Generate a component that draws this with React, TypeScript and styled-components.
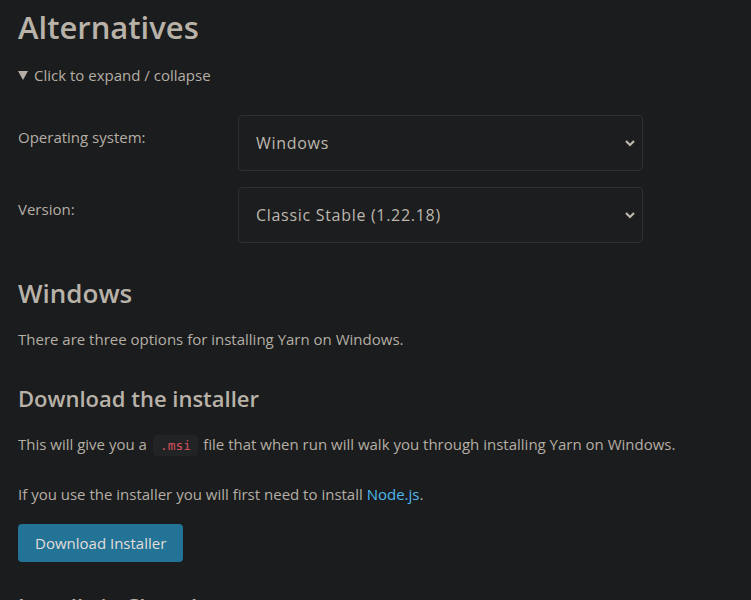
import React from 'react';
import styled, { createGlobalStyle } from 'styled-components';

const GlobalStyle = createGlobalStyle`
  html, body {
    margin: 0;
    padding: 0;
    background: #1b1c1e;
  }
  body {
    font-family: 'Open Sans', 'Noto Sans', sans-serif;
    color: #b4aea4;
    font-size: 15px;
  }
`;

const Page = styled.main`
  padding: 0 18px;
  height: 600px;
  overflow: hidden;
`;

const Title = styled.h1`
  margin: 8px 0 0;
  font-size: 31px;
  font-weight: 600;
  line-height: 38px;
  color: #b8b2a8;
`;

const Details = styled.details`
  margin-top: 19px;
`;

const Summary = styled.summary`
  cursor: pointer;
  list-style: none;
  display: flex;
  align-items: center;
  gap: 6px;
  line-height: 20px;
  &::-webkit-details-marker {
    display: none;
  }
`;

const Caret = styled.span`
  width: 0;
  height: 0;
  border-left: 5px solid transparent;
  border-right: 5px solid transparent;
  border-top: 9px solid #b4aea4;
`;

const Form = styled.div`
  margin-top: 30px;
  display: flex;
  flex-direction: column;
  gap: 16px;
`;

const Row = styled.label`
  display: grid;
  grid-template-columns: 220px 405px;
  align-items: center;
`;

const LabelText = styled.span`
  align-self: start;
  padding-top: 12px;
`;

const SelectWrap = styled.div`
  position: relative;
  height: 56px;
`;

const Select = styled.select`
  appearance: none;
  width: 100%;
  height: 100%;
  box-sizing: border-box;
  background: #1c1d1f;
  border: 1px solid #2e3032;
  border-radius: 4px;
  color: #bdb7ad;
  font-family: 'Open Sans', sans-serif;
  font-size: 16px;
  letter-spacing: 0.7px;
  padding: 0 40px 0 17px;
  outline: none;
`;

const Chevron = styled.svg`
  position: absolute;
  right: 6px;
  top: 50%;
  margin-top: -4px;
  pointer-events: none;
`;

const H2 = styled.h2`
  margin: 33px 0 0;
  font-size: 26px;
  font-weight: 600;
  line-height: 34px;
  color: #b8b2a8;
`;

const H3 = styled.h3<{ $top: number }>`
  margin: ${(p) => p.$top}px 0 0;
  font-size: 22px;
  font-weight: 600;
  line-height: 30px;
  color: #b8b2a8;
`;

const P = styled.p<{ $top: number }>`
  margin: ${(p) => p.$top}px 0 0;
  line-height: 24px;
`;

const Code = styled.code`
  font-family: 'DejaVu Sans Mono', monospace;
  font-size: 13px;
  color: #d4525f;
  background: #212325;
  border-radius: 4px;
  padding: 3px 7px;
  margin: 0 5px 0 6px;
`;

const Link = styled.a`
  color: #4fb8ec;
  text-decoration: none;
`;

const Button = styled.a`
  display: inline-flex;
  align-items: center;
  height: 38px;
  margin-top: 18px;
  padding: 0 17px;
  box-sizing: border-box;
  background: #237397;
  border-radius: 4px;
  color: #e2ded8;
  text-decoration: none;
  font-size: 15px;
`;

const Arrow = () => (
  <Chevron width="14" height="9" viewBox="0 0 14 9">
    <path d="M3 2l4 4 4-4" stroke="#bdb7ad" strokeWidth="2.2" fill="none" />
  </Chevron>
);

export default function App() {
  return (
    <>
      <GlobalStyle />
      <Page>
        <Title>Alternatives</Title>
        <Details open>
          <Summary>
            <Caret />
            Click to expand / collapse
          </Summary>
          <Form>
            <Row>
              <LabelText>Operating system:</LabelText>
              <SelectWrap>
                <Select defaultValue="windows">
                  <option value="windows">Windows</option>
                  <option value="mac">macOS</option>
                  <option value="linux">Linux</option>
                </Select>
                <Arrow />
              </SelectWrap>
            </Row>
            <Row>
              <LabelText>Version:</LabelText>
              <SelectWrap>
                <Select defaultValue="classic">
                  <option value="classic">Classic Stable (1.22.18)</option>
                  <option value="rc">Classic RC</option>
                </Select>
                <Arrow />
              </SelectWrap>
            </Row>
          </Form>
          <H2>Windows</H2>
          <P $top={17}>There are three options for installing Yarn on Windows.</P>
          <H3 $top={32}>Download the installer</H3>
          <P $top={19}>
            This will give you a<Code>.msi</Code>file that when run will walk you through installing Yarn on Windows.
          </P>
          <P $top={24}>
            If you use the installer you will first need to install <Link href="#">Node.js</Link>.
          </P>
          <Button href="#">Download Installer</Button>
          <H3 $top={29}>Install via Chocolatey</H3>
        </Details>
      </Page>
    </>
  );
}
